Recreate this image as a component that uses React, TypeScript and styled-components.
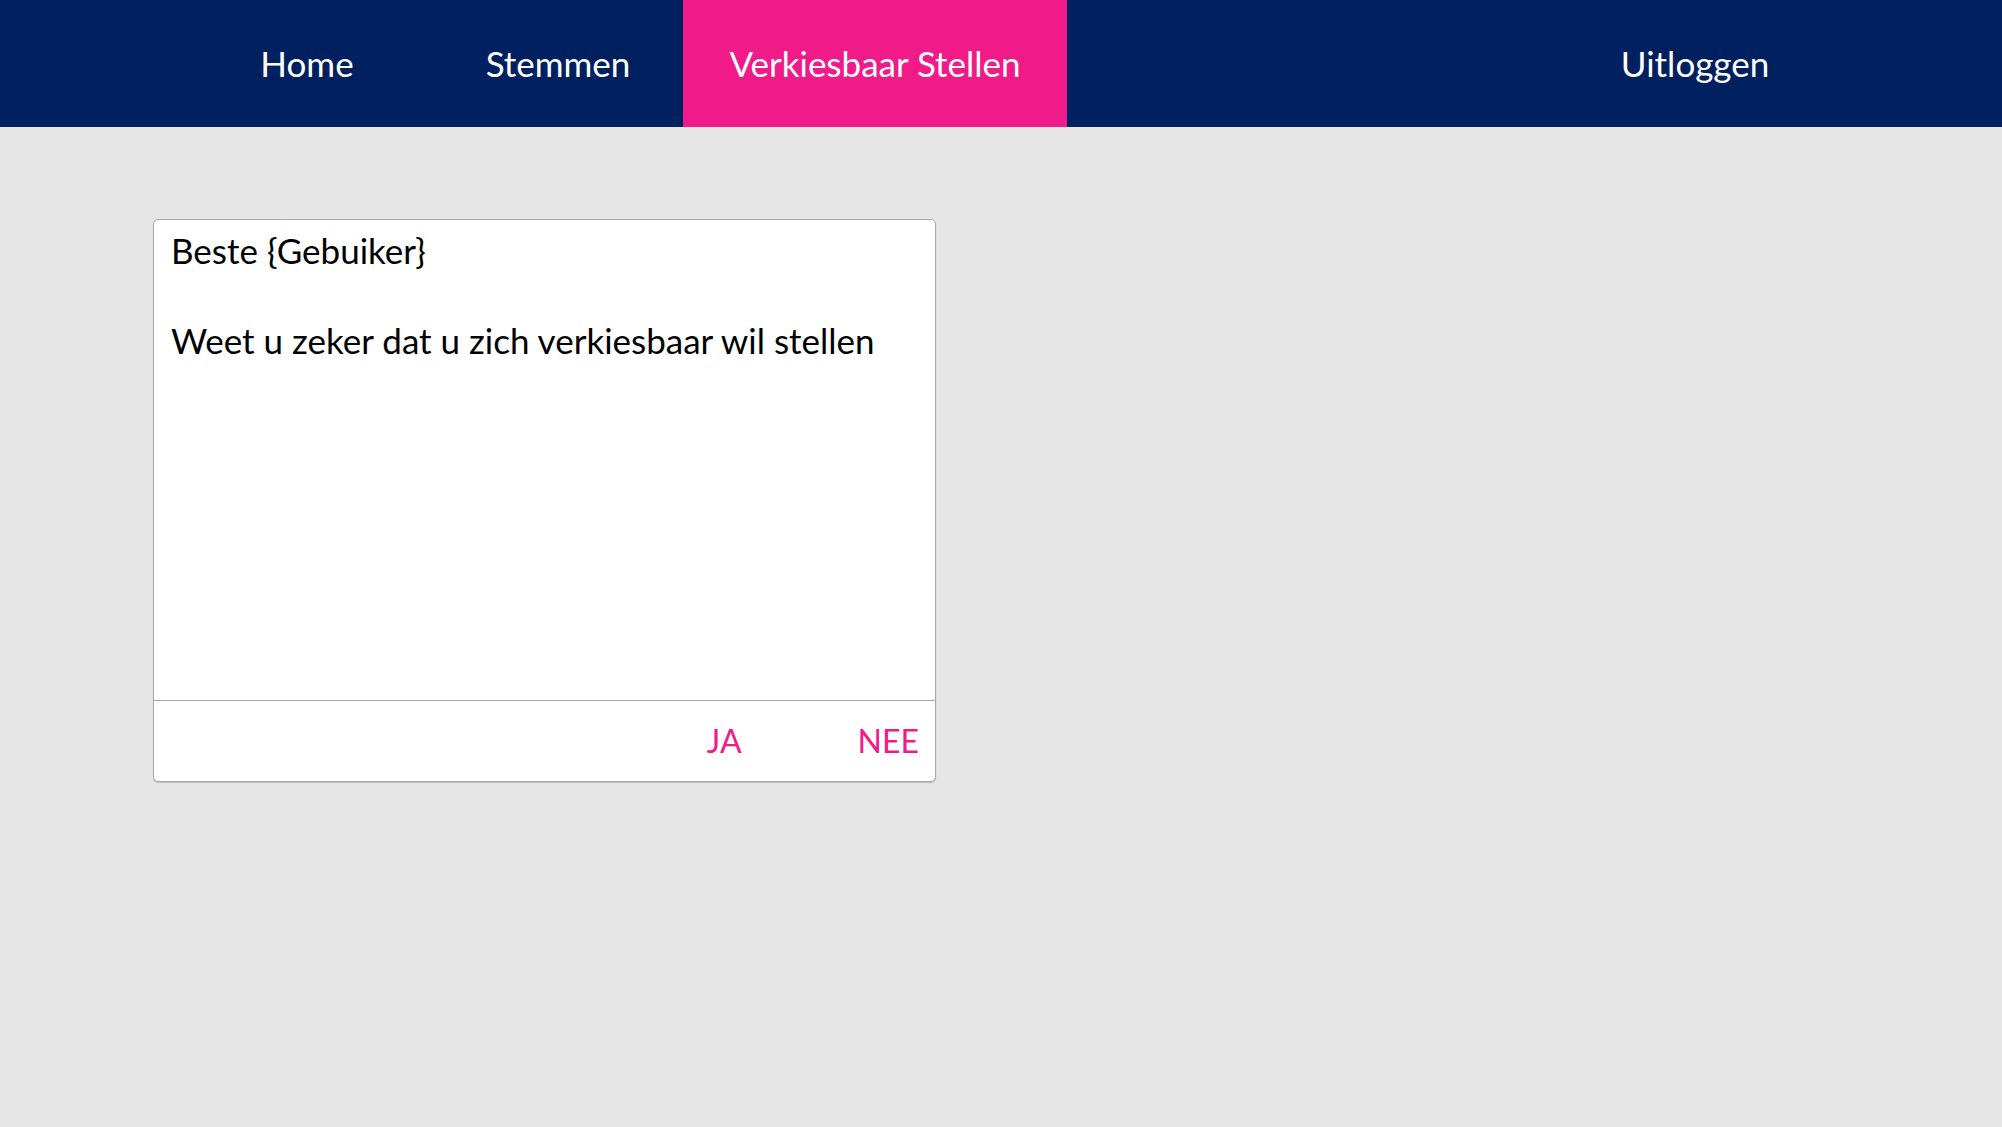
import React from "react";
import styled, { createGlobalStyle } from "styled-components";

const GlobalStyle = createGlobalStyle`
  html, body {
    margin: 0;
    padding: 0;
    background: #e6e6e6;
    font-family: Lato, "Open Sans", "Liberation Sans", sans-serif;
  }
  * { box-sizing: border-box; }
`;

const Page = styled.div`
  min-height: 1127px;
  background: #e6e6e6;
`;

const NavBar = styled.nav`
  display: flex;
  align-items: stretch;
  height: 127px;
  background: #00205f;
  padding-left: 207px;
`;

const NavItem = styled.a<{ $w: number; $ml?: number; $mr?: number; $active?: boolean }>`
  display: flex;
  align-items: center;
  justify-content: center;
  width: ${(p) => p.$w}px;
  margin-left: ${(p) => p.$ml ?? 0}px;
  margin-right: ${(p) => p.$mr ?? 0}px;
  padding-bottom: 1px;
  background: ${(p) => (p.$active ? "#f11a89" : "transparent")};
  color: #ffffff;
  font-size: 35px;
  text-decoration: none;
  cursor: pointer;
`;

const Spacer = styled.div`
  flex: 1;
`;

const Content = styled.main`
  padding: 92px 0 0 153px;
`;

const Card = styled.section`
  width: 783px;
  height: 563px;
  background: #ffffff;
  border: 1px solid #a9a9a9;
  border-radius: 5px;
  box-shadow: 0 1px 1px rgba(0, 0, 0, 0.18);
  display: flex;
  flex-direction: column;
`;

const Body = styled.div`
  flex: 1;
  padding: 8px 16px 0 17px;
  color: #000000;
  font-size: 35px;
  line-height: 45px;
`;

const Line = styled.p`
  margin: 0;
  min-height: 45px;
`;

const Footer = styled.div`
  height: 81px;
  border-top: 1px solid #aaaaaa;
  display: flex;
  align-items: center;
  justify-content: flex-end;
  gap: 116px;
  padding: 0 16px 1px 0;
`;

const Action = styled.button`
  border: none;
  background: none;
  padding: 0;
  color: #f11a89;
  font-family: inherit;
  font-size: 32px;
  line-height: 42px;
  cursor: pointer;
`;

export default function App() {
  return (
    <Page>
      <GlobalStyle />
      <NavBar>
        <NavItem $w={200}>Home</NavItem>
        <NavItem $w={250} $ml={26}>Stemmen</NavItem>
        <NavItem $w={384} $active>Verkiesbaar Stellen</NavItem>
        <Spacer />
        <NavItem $w={240} $mr={187}>Uitloggen</NavItem>
      </NavBar>
      <Content>
        <Card>
          <Body>
            <Line>Beste {"{Gebuiker}"}</Line>
            <Line />
            <Line>Weet u zeker dat u zich verkiesbaar wil stellen</Line>
          </Body>
          <Footer>
            <Action>JA</Action>
            <Action>NEE</Action>
          </Footer>
        </Card>
      </Content>
    </Page>
  );
}
